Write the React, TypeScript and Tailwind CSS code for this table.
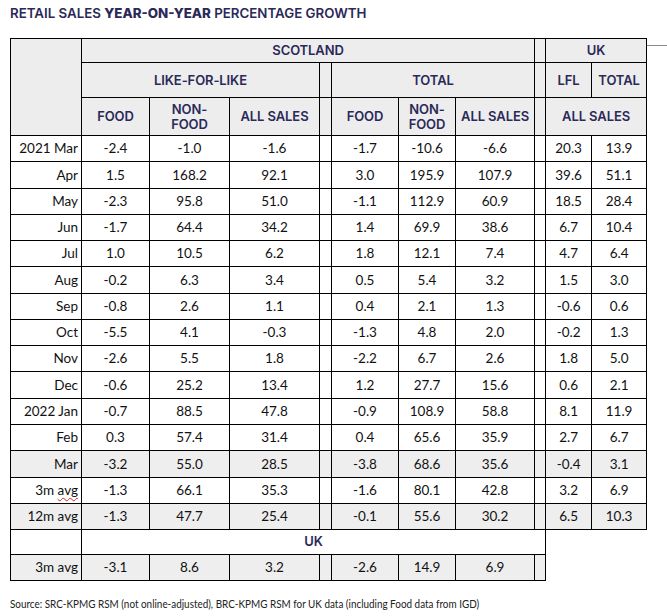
import React from "react";

type Row = { label: string; v: string[]; shaded?: boolean; h: number; squiggle?: boolean };

const rows: Row[] = [
  { label: "2021 Mar", v: ["-2.4", "-1.0", "-1.6", "-1.7", "-10.6", "-6.6", "20.3", "13.9"], h: 26 },
  { label: "Apr", v: ["1.5", "168.2", "92.1", "3.0", "195.9", "107.9", "39.6", "51.1"], h: 27 },
  { label: "May", v: ["-2.3", "95.8", "51.0", "-1.1", "112.9", "60.9", "18.5", "28.4"], h: 26 },
  { label: "Jun", v: ["-1.7", "64.4", "34.2", "1.4", "69.9", "38.6", "6.7", "10.4"], h: 26 },
  { label: "Jul", v: ["1.0", "10.5", "6.2", "1.8", "12.1", "7.4", "4.7", "6.4"], h: 26 },
  { label: "Aug", v: ["-0.2", "6.3", "3.4", "0.5", "5.4", "3.2", "1.5", "3.0"], h: 27 },
  { label: "Sep", v: ["-0.8", "2.6", "1.1", "0.4", "2.1", "1.3", "-0.6", "0.6"], h: 26 },
  { label: "Oct", v: ["-5.5", "4.1", "-0.3", "-1.3", "4.8", "2.0", "-0.2", "1.3"], h: 26 },
  { label: "Nov", v: ["-2.6", "5.5", "1.8", "-2.2", "6.7", "2.6", "1.8", "5.0"], h: 26 },
  { label: "Dec", v: ["-0.6", "25.2", "13.4", "1.2", "27.7", "15.6", "0.6", "2.1"], h: 27 },
  { label: "2022 Jan", v: ["-0.7", "88.5", "47.8", "-0.9", "108.9", "58.8", "8.1", "11.9"], h: 26 },
  { label: "Feb", v: ["0.3", "57.4", "31.4", "0.4", "65.6", "35.9", "2.7", "6.7"], h: 26 },
  { label: "Mar", v: ["-3.2", "55.0", "28.5", "-3.8", "68.6", "35.6", "-0.4", "3.1"], shaded: true, h: 27 },
  { label: "3m avg", v: ["-1.3", "66.1", "35.3", "-1.6", "80.1", "42.8", "3.2", "6.9"], h: 26, squiggle: true },
  { label: "12m avg", v: ["-1.3", "47.7", "25.4", "-0.1", "55.6", "30.2", "6.5", "10.3"], shaded: true, h: 26 },
];

const colW = [71, 68, 80, 90, 12, 67, 57, 79, 11, 46, 55];

const hd = "border border-black bg-[#ededed] text-center text-[#2b2958] font-semibold text-[13px] leading-[15px] tracking-[-0.1px] p-0";
const cell = "border border-black text-center p-0";

export default function App() {
  return (
    <div className="relative w-[667px] h-[616px] bg-white pl-[10px]" style={{ fontFamily: "Lato, 'Noto Sans', sans-serif" }}>
      <div
        className="h-[38px] pt-[5px] leading-[16px] text-[13.3px] font-semibold text-[#2b2958] whitespace-nowrap"
        style={{ fontFamily: "Inter, 'Noto Sans', sans-serif" }}
      >
        RETAIL SALES <span className="font-extrabold">YEAR-ON-YEAR</span> PERCENTAGE GROWTH
      </div>
      <div className="absolute left-[647px] top-[45px] w-[20px] h-px bg-[#8c8c8c]" />
      <table className="table-fixed border-collapse w-[636px] text-[13.5px] text-[#111]">
        <colgroup>
          {colW.map((w, i) => (
            <col key={i} style={{ width: w }} />
          ))}
        </colgroup>
        <thead style={{ fontFamily: "Inter, 'Noto Sans', sans-serif" }}>
          <tr className="h-[24px]">
            <th rowSpan={3} className={hd}></th>
            <th colSpan={7} className={hd}>SCOTLAND</th>
            <th className={hd}></th>
            <th colSpan={2} className={hd}>UK</th>
          </tr>
          <tr className="h-[35px]">
            <th colSpan={3} className={hd}>LIKE-FOR-LIKE</th>
            <th className={hd}></th>
            <th colSpan={3} className={hd}>TOTAL</th>
            <th className={hd}></th>
            <th className={hd}>LFL</th>
            <th className={hd}>TOTAL</th>
          </tr>
          <tr className="h-[38px]">
            <th className={hd}>FOOD</th>
            <th className={hd}>NON-<br />FOOD</th>
            <th className={`${hd} whitespace-nowrap`}>ALL SALES</th>
            <th className={hd}></th>
            <th className={hd}>FOOD</th>
            <th className={hd}>NON-<br />FOOD</th>
            <th className={`${hd} whitespace-nowrap`}>ALL SALES</th>
            <th className={hd}></th>
            <th colSpan={2} className={hd}>ALL SALES</th>
          </tr>
        </thead>
        <tbody>
          {rows.map((r, i) => {
            const bg = r.shaded ? "bg-[#eeeeee]" : "bg-white";
            return (
              <tr key={i} style={{ height: r.h }}>
                <td className={`border border-black text-right pr-[3px] pl-0 py-0 whitespace-nowrap ${bg}`}>
                  {r.squiggle ? (
                    <>
                      3m{" "}
                      <span className="underline decoration-wavy decoration-[#e02020] decoration-1 underline-offset-[2px]">avg</span>
                    </>
                  ) : (
                    r.label
                  )}
                </td>
                {r.v.slice(0, 3).map((x, j) => (
                  <td key={"a" + j} className={`${cell} ${bg}`}>{x}</td>
                ))}
                <td className={`${cell} ${bg}`}></td>
                {r.v.slice(3, 6).map((x, j) => (
                  <td key={"b" + j} className={`${cell} ${bg}`}>{x}</td>
                ))}
                <td className={`${cell} ${bg}`}></td>
                {r.v.slice(6, 8).map((x, j) => (
                  <td key={"c" + j} className={`${cell} ${bg}`}>{x}</td>
                ))}
              </tr>
            );
          })}
          <tr className="h-[25px]">
            <td className="border border-black bg-white p-0"></td>
            <td
              colSpan={8}
              className="border border-black bg-white text-center p-0 text-[#2b2958] font-semibold text-[13px] tracking-[-0.1px]"
              style={{ fontFamily: "Inter, 'Noto Sans', sans-serif" }}
            >
              UK
            </td>
          </tr>
          <tr className="h-[26px]">
            <td className="border border-black text-right pr-[3px] p-0 bg-[#eeeeee] whitespace-nowrap">3m avg</td>
            {["-3.1", "8.6", "3.2"].map((x, j) => (
              <td key={"d" + j} className={`${cell} bg-[#eeeeee]`}>{x}</td>
            ))}
            <td className={`${cell} bg-[#eeeeee]`}></td>
            {["-2.6", "14.9", "6.9"].map((x, j) => (
              <td key={"e" + j} className={`${cell} bg-[#eeeeee]`}>{x}</td>
            ))}
            <td className={`${cell} bg-[#eeeeee]`}></td>
          </tr>
        </tbody>
      </table>
      <div className="mt-[16px] leading-[14px] text-[11px] text-[#222]">
        <span className="inline-block origin-left scale-x-[0.9] whitespace-nowrap">
          Source: SRC-KPMG RSM (not online-adjusted), BRC-KPMG RSM for UK data (including Food data from IGD)
        </span>
      </div>
    </div>
  );
}
